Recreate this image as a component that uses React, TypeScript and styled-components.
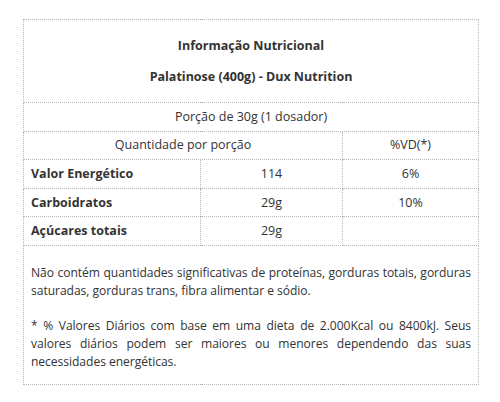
import React from 'react'
import styled, { createGlobalStyle } from 'styled-components'

const GlobalStyle = createGlobalStyle`
  body {
    margin: 0;
    background: #fff;
    font-family: "Open Sans", "Noto Sans", "Liberation Sans", sans-serif;
    color: #333;
  }
`

const Wrapper = styled.div`
  padding: 19px 0 0 23px;
`

const Table = styled.table`
  width: 455px;
  border-collapse: collapse;
  table-layout: fixed;
  font-size: 12.5px;
  border: 1px dotted #b8b8b8;
`

const Cell = styled.td<{ $align?: 'left' | 'center'; $bold?: boolean }>`
  border: 1px dotted #b8b8b8;
  height: 27.6px;
  padding: 0 7px;
  text-align: ${(p) => p.$align || 'center'};
  font-weight: ${(p) => (p.$bold ? 700 : 400)};
  vertical-align: middle;
  line-height: 18px;
`

const HeaderCell = styled.td`
  border: 1px dotted #b8b8b8;
  padding: 17px 7px 16px;
  text-align: center;
`

const Title = styled.p`
  margin: 0;
  font-weight: 700;
  line-height: 18px;

  & + & {
    margin-top: 13px;
  }
`

const FooterCell = styled.td`
  border: 1px dotted #b8b8b8;
  padding: 18px 7px 13px;
  text-align: justify;
`

const Note = styled.p`
  margin: 0;
  font-size: 12.1px;
  line-height: 18px;
  letter-spacing: -0.05px;

  & + & {
    margin-top: 17px;
  }
`

type Row = { name: string; qty: string; vd: string }

const rows: Row[] = [
  { name: 'Valor Energético', qty: '114', vd: '6%' },
  { name: 'Carboidratos', qty: '29g', vd: '10%' },
  { name: 'Açúcares totais', qty: '29g', vd: '' },
]

export default function App() {
  return (
    <Wrapper>
      <GlobalStyle />
      <Table>
        <colgroup>
          <col style={{ width: 177 }} />
          <col style={{ width: 142 }} />
          <col style={{ width: 136 }} />
        </colgroup>
        <tbody>
          <tr>
            <HeaderCell colSpan={3}>
              <Title>Informação Nutricional</Title>
              <Title>Palatinose (400g) - Dux Nutrition</Title>
            </HeaderCell>
          </tr>
          <tr>
            <Cell colSpan={3}>Porção de 30g (1 dosador)</Cell>
          </tr>
          <tr>
            <Cell colSpan={2}>Quantidade por porção</Cell>
            <Cell>%VD(*)</Cell>
          </tr>
          {rows.map((r) => (
            <tr key={r.name}>
              <Cell $align="left" $bold>
                {r.name}
              </Cell>
              <Cell>{r.qty}</Cell>
              <Cell>{r.vd}</Cell>
            </tr>
          ))}
          <tr>
            <FooterCell colSpan={3}>
              <Note>
                Não contém quantidades significativas de proteínas, gorduras totais, gorduras
                saturadas, gorduras trans, fibra alimentar e sódio.
              </Note>
              <Note>
                * % Valores Diários com base em uma dieta de 2.000Kcal ou 8400kJ. Seus valores
                diários podem ser maiores ou menores dependendo das suas necessidades
                energéticas.
              </Note>
            </FooterCell>
          </tr>
        </tbody>
      </Table>
    </Wrapper>
  )
}
